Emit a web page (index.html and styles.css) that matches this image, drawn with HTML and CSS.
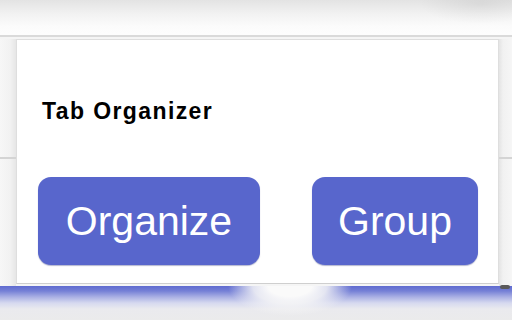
FILE: index.html
```html
<!DOCTYPE html>
<html>
<head>
<meta charset="utf-8">
<link rel="stylesheet" href="styles.css">
</head>
<body>
<div class="page">
  <div class="topbar"></div>
  <div class="middle">
    <div class="gutter gutter-left"></div>
    <div class="panel">
      <h1 class="title">Tab Organizer</h1>
      <div class="actions">
        <button class="btn btn-organize">Organize</button>
        <button class="btn btn-group">Group</button>
      </div>
    </div>
    <div class="gutter gutter-right"><span class="grip"></span></div>
  </div>
  <div class="bottomband"></div>
</div>
</body>
</html>
```
FILE: styles.css
```css
html, body {
  margin: 0;
  padding: 0;
}
body {
  width: 512px;
  height: 320px;
  overflow: hidden;
  background: #f3f3f3;
  font-family: "Liberation Sans", Arial, sans-serif;
}
.page {
  display: flex;
  flex-direction: column;
  width: 512px;
  height: 320px;
}
.topbar {
  height: 35px;
  flex: none;
  background:
    radial-gradient(ellipse 60px 20px at 480px 4px, rgba(0,0,0,0.06), rgba(0,0,0,0)),
    linear-gradient(to bottom, #e3e3e3 0px, #f2f2f2 14px, #fbfbfb 26px, #fdfdfd 33px);
  border-bottom: 2px solid #dadada;
}
.middle {
  flex: none;
  height: 247px;
  display: flex;
  padding-top: 2px;
  background: #f5f5f5;
}
.gutter {
  position: relative;
  flex: none;
}
.gutter-left {
  width: 16px;
  background:
    linear-gradient(to bottom, transparent 118px, #d4d4d4 118px, #d4d4d4 120px, transparent 120px),
    linear-gradient(to right, #f7f7f7 0px, #f2f2f2 10px, #e6e6e6 16px);
}
.gutter-right {
  width: 13px;
  background:
    linear-gradient(to bottom, transparent 118px, #d4d4d4 118px, #d4d4d4 120px, transparent 120px),
    linear-gradient(to right, #e4e4e4 0px, #f1f1f1 4px, #f6f6f6 13px);
}
.grip {
  position: absolute;
  left: 1px;
  bottom: -3px;
  width: 10px;
  height: 4px;
  border-radius: 2px;
  background: #5a5a5a;
}
.panel {
  flex: none;
  width: 481px;
  height: 243px;
  border: 1px solid #dedede;
  border-bottom-color: #cfcfcf;
  background: #ffffff;
  box-sizing: content-box;
  display: flex;
  flex-direction: column;
}
.title {
  margin: 58px 0 0 25px;
  font-size: 23px;
  line-height: 27px;
  font-weight: bold;
  letter-spacing: 1.4px;
  color: #000000;
}
.actions {
  display: flex;
  justify-content: space-between;
  padding: 0 20px 0 21px;
  margin-top: 52px;
}
.btn {
  height: 88px;
  border: none;
  border-radius: 13px;
  background: #5866cc;
  color: #ffffff;
  font-family: "Liberation Sans", Arial, sans-serif;
  font-size: 41px;
  padding: 0;
  box-shadow: 0 1px 1px rgba(40,50,120,0.35);
}
.btn-organize {
  width: 222px;
}
.btn-group {
  width: 166px;
}
.bottomband {
  flex: 1;
  background:
    radial-gradient(ellipse 62px 30px at 290px 0px, rgba(250,250,250,1) 35%, rgba(246,246,246,0.85) 60%, rgba(240,240,240,0) 100%),
    linear-gradient(to bottom, #5f6bd0 0px, #7580d6 5px, #aab0e4 11px, #d6d9ef 17px, #eaeaee 23px, #ebebeb 36px);
}
```
